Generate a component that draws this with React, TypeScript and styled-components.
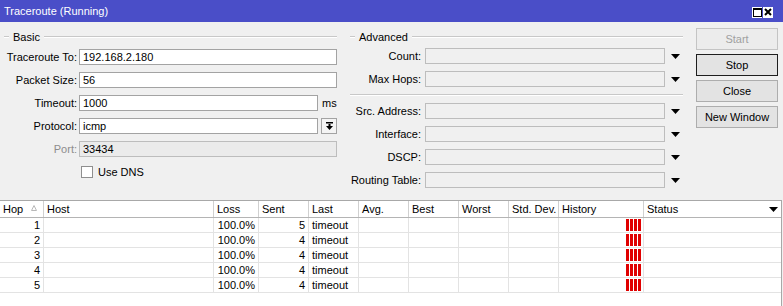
import styled, { createGlobalStyle } from 'styled-components'

const GlobalStyle = createGlobalStyle`
  html, body {
    margin: 0;
    padding: 0;
    background: #f0f0f0;
  }
  body {
    font-family: "Liberation Sans", Arial, sans-serif;
    font-size: 11px;
    color: #000;
  }
`

const columns = [
  { title: 'Hop', width: 44 },
  { title: 'Host', width: 170 },
  { title: 'Loss', width: 45 },
  { title: 'Sent', width: 50 },
  { title: 'Last', width: 50 },
  { title: 'Avg.', width: 50 },
  { title: 'Best', width: 50 },
  { title: 'Worst', width: 50 },
  { title: 'Std. Dev.', width: 50 },
  { title: 'History', width: 85 },
  { title: 'Status', width: 0 }
]

const gridCols = columns
  .map(c => (c.width ? `${c.width}px` : '1fr'))
  .join(' ')

const hops = [
  { hop: 1, loss: '100.0%', sent: 5, last: 'timeout' },
  { hop: 2, loss: '100.0%', sent: 4, last: 'timeout' },
  { hop: 3, loss: '100.0%', sent: 4, last: 'timeout' },
  { hop: 4, loss: '100.0%', sent: 4, last: 'timeout' },
  { hop: 5, loss: '100.0%', sent: 4, last: 'timeout' }
]

const advancedTop = ['Count:', 'Max Hops:']
const advancedBottom = ['Src. Address:', 'Interface:', 'DSCP:', 'Routing Table:']

function DownArrow() {
  return (
    <svg width="9" height="5" viewBox="0 0 9 5">
      <path d="M0 0 H9 L4.5 5 Z" fill="#000" />
    </svg>
  )
}

function App() {
  return (
    <>
      <GlobalStyle />
      <Window>
        <TitleBar>
          <span>Traceroute (Running)</span>
          <TitleButtons>
            <TitleBtn>
              <svg width="9" height="9" viewBox="0 0 9 9">
                <rect x="0.5" y="0.5" width="8" height="8" fill="none" stroke="#000" />
                <rect x="0.5" y="0.5" width="8" height="1.5" fill="#000" />
              </svg>
            </TitleBtn>
            <TitleBtn>
              <svg width="8" height="8" viewBox="0 0 8 8">
                <path d="M1 1 L7 7 M7 1 L1 7" stroke="#000" strokeWidth="2" />
              </svg>
            </TitleBtn>
          </TitleButtons>
        </TitleBar>

        <TopArea>
          <Group>
            <GroupHeader>
              <LeadLine />
              <GroupTitle>Basic</GroupTitle>
              <TailLine />
            </GroupHeader>
            <Fields>
              <FieldRow $labelWidth={75}>
                <Label>Traceroute To:</Label>
                <Input>192.168.2.180</Input>
              </FieldRow>
              <FieldRow $labelWidth={75}>
                <Label>Packet Size:</Label>
                <Input>56</Input>
              </FieldRow>
              <FieldRow $labelWidth={75}>
                <Label>Timeout:</Label>
                <Input>1000</Input>
                <Unit>ms</Unit>
              </FieldRow>
              <FieldRow $labelWidth={75}>
                <Label>Protocol:</Label>
                <Input>icmp</Input>
                <PickButton>
                  <svg width="7" height="8" viewBox="0 0 7 8">
                    <rect x="0" y="0" width="7" height="1.5" fill="#000" />
                    <rect x="2.5" y="2" width="2" height="2" fill="#000" />
                    <path d="M0 4 H7 L3.5 8 Z" fill="#000" />
                  </svg>
                </PickButton>
              </FieldRow>
              <FieldRow $labelWidth={75}>
                <Label $disabled>Port:</Label>
                <Input $disabled>33434</Input>
              </FieldRow>
              <CheckRow>
                <CheckBox />
                <span>Use DNS</span>
              </CheckRow>
            </Fields>
          </Group>

          <Group>
            <GroupHeader>
              <LeadLine />
              <GroupTitle>Advanced</GroupTitle>
              <TailLine />
            </GroupHeader>
            <Fields $top={5}>
              {advancedTop.map(label => (
                <FieldRow key={label} $labelWidth={75}>
                  <Label $pad={4}>{label}</Label>
                  <Input $empty />
                  <ArrowCell>
                    <DownArrow />
                  </ArrowCell>
                </FieldRow>
              ))}
              <Separator />
              {advancedBottom.map(label => (
                <FieldRow key={label} $labelWidth={75}>
                  <Label $pad={4}>{label}</Label>
                  <Input $empty />
                  <ArrowCell>
                    <DownArrow />
                  </ArrowCell>
                </FieldRow>
              ))}
            </Fields>
          </Group>

          <ButtonCol>
            <ActionButton disabled>Start</ActionButton>
            <ActionButton $default>Stop</ActionButton>
            <ActionButton>Close</ActionButton>
            <ActionButton>New Window</ActionButton>
          </ButtonCol>
        </TopArea>

        <TableWrap>
          <HeaderRow>
            {columns.map((col, i) => (
              <HeadCell key={col.title} $last={i === columns.length - 1}>
                <span>{col.title}</span>
                {col.title === 'Hop' && (
                  <SortMark>
                    <svg width="6" height="6" viewBox="0 0 6 6">
                      <path d="M3 0.5 L5.5 5.5 H0.5 Z" fill="none" stroke="#b8b8b8" />
                    </svg>
                  </SortMark>
                )}
                {col.title === 'Status' && (
                  <ColMenu>
                    <svg width="9" height="5" viewBox="0 0 9 5">
                      <path d="M0 0 H9 L4.5 5 Z" fill="#000" />
                    </svg>
                  </ColMenu>
                )}
              </HeadCell>
            ))}
          </HeaderRow>
          {hops.map(h => (
            <DataRow key={h.hop}>
              <Cell $align="right">{h.hop}</Cell>
              <Cell />
              <Cell $align="right">{h.loss}</Cell>
              <Cell $align="right">{h.sent}</Cell>
              <Cell>{h.last}</Cell>
              <Cell />
              <Cell />
              <Cell />
              <Cell />
              <HistoryCell>
                {[0, 1, 2, 3].map(b => (
                  <Bar key={b} />
                ))}
              </HistoryCell>
              <Cell $last />
            </DataRow>
          ))}
        </TableWrap>
      </Window>
    </>
  )
}

export default App

const Window = styled.div`
  width: 783px;
  height: 306px;
  display: flex;
  flex-direction: column;
  background: #f0f0f0;
  overflow: hidden;
`

const TitleBar = styled.div`
  height: 22px;
  flex: none;
  background: #4a4ec8;
  color: #fff;
  display: flex;
  align-items: center;
  justify-content: space-between;
  padding: 0 10px 0 4px;
`

const TitleButtons = styled.div`
  display: flex;
  gap: 1px;
  padding-top: 2px;
`

const TitleBtn = styled.div`
  width: 10px;
  height: 11px;
  background: #fff;
  display: flex;
  align-items: center;
  justify-content: center;
`

const TopArea = styled.div`
  height: 178px;
  flex: none;
  display: flex;
  gap: 13px;
  padding-left: 4px;
`

const Group = styled.div`
  width: 333px;
  display: flex;
  flex-direction: column;
`

const GroupHeader = styled.div`
  margin-top: 8px;
  height: 13px;
  display: flex;
  align-items: center;
`

const LeadLine = styled.div`
  width: 5px;
  border-top: 1px solid #c8c8c8;
  border-bottom: 1px solid #fff;
`

const TailLine = styled.div`
  flex: 1;
  border-top: 1px solid #c8c8c8;
  border-bottom: 1px solid #fff;
`

const GroupTitle = styled.span`
  padding: 0 4px 0 4px;
`

const Fields = styled.div<{ $top?: number }>`
  margin-top: ${p => p.$top ?? 6}px;
  display: flex;
  flex-direction: column;
  gap: 7px;
`

const FieldRow = styled.div<{ $labelWidth: number }>`
  display: flex;
  align-items: center;
  height: 16px;
  & > :first-child {
    width: ${p => p.$labelWidth}px;
  }
`

const Label = styled.span<{ $disabled?: boolean; $pad?: number }>`
  flex: none;
  text-align: right;
  padding-right: ${p => p.$pad ?? 2}px;
  box-sizing: border-box;
  white-space: nowrap;
  color: ${p => (p.$disabled ? '#8d8d8d' : '#000')};
`

const Input = styled.div<{ $disabled?: boolean; $empty?: boolean }>`
  flex: 1;
  height: 16px;
  box-sizing: border-box;
  border: 1px solid ${p => (p.$disabled || p.$empty ? '#bdbdbd' : '#a3a3a3')};
  background: ${p => (p.$disabled ? '#ebebeb' : p.$empty ? '#f0f0f0' : '#fff')};
  padding: 0 3px;
  line-height: 14px;
  white-space: nowrap;
`

const Unit = styled.span`
  width: 19px;
  flex: none;
  padding-left: 4px;
  box-sizing: border-box;
`

const PickButton = styled.div`
  width: 16px;
  height: 16px;
  flex: none;
  margin-left: 3px;
  box-sizing: border-box;
  border: 1px solid #a3a3a3;
  background: #f4f4f4;
  display: flex;
  align-items: center;
  justify-content: center;
`

const ArrowCell = styled.div`
  width: 18px;
  flex: none;
  display: flex;
  justify-content: flex-start;
  padding-left: 6px;
  box-sizing: border-box;
  align-items: center;
`

const Separator = styled.div`
  height: 1px;
  background: #c8c8c8;
  border-bottom: 1px solid #fff;
`

const CheckRow = styled.label`
  display: flex;
  align-items: center;
  height: 16px;
  padding-left: 77px;
  gap: 5px;
`

const CheckBox = styled.span`
  width: 12px;
  height: 12px;
  box-sizing: border-box;
  border: 1px solid #8f8f8f;
  background: #fff;
`

const ButtonCol = styled.div`
  margin-top: 6px;
  width: 82px;
  display: flex;
  flex-direction: column;
  gap: 4px;
`

const ActionButton = styled.button<{ $default?: boolean }>`
  height: 22px;
  margin: 0;
  padding: 0;
  font: inherit;
  color: #000;
  background: #e3e3e3;
  border: 1px solid ${p => (p.$default ? '#1e1e1e' : '#adadad')};

  &:disabled {
    color: #a0a0a0;
    background: #ececec;
    border-color: #c4c4c4;
  }
`

const TableWrap = styled.div`
  flex: 1;
  width: 782px;
  box-sizing: border-box;
  background: #fff;
  border-top: 1px solid #a8a8a8;
  border-right: 1px solid #a8a8a8;
`

const HeaderRow = styled.div`
  display: grid;
  grid-template-columns: ${gridCols};
  height: 17px;
  box-sizing: border-box;
  border-bottom: 1px solid #b4b4b4;
`

const HeadCell = styled.div<{ $last?: boolean }>`
  position: relative;
  display: flex;
  align-items: center;
  padding-left: 3px;
  border-right: ${p => (p.$last ? 'none' : '1px solid #d0d0d0')};
  white-space: nowrap;
  overflow: hidden;
`

const SortMark = styled.span`
  position: absolute;
  right: 6px;
  top: 4px;
  display: flex;
`

const ColMenu = styled.span`
  position: absolute;
  right: 3px;
  top: 6px;
  display: flex;
`

const DataRow = styled.div`
  display: grid;
  grid-template-columns: ${gridCols};
  height: 15px;
  box-sizing: border-box;
  border-bottom: 1px solid #e3e3e3;
`

const Cell = styled.div<{ $align?: 'left' | 'right'; $last?: boolean }>`
  padding: 0 3px;
  line-height: 14px;
  text-align: ${p => p.$align ?? 'left'};
  border-right: ${p => (p.$last ? 'none' : '1px solid #e3e3e3')};
  white-space: nowrap;
  overflow: hidden;
`

const HistoryCell = styled.div`
  display: flex;
  justify-content: flex-end;
  align-items: center;
  gap: 1px;
  padding-right: 2px;
  border-right: 1px solid #e3e3e3;
`

const Bar = styled.span`
  width: 3px;
  height: 12px;
  background: #e00000;
`
